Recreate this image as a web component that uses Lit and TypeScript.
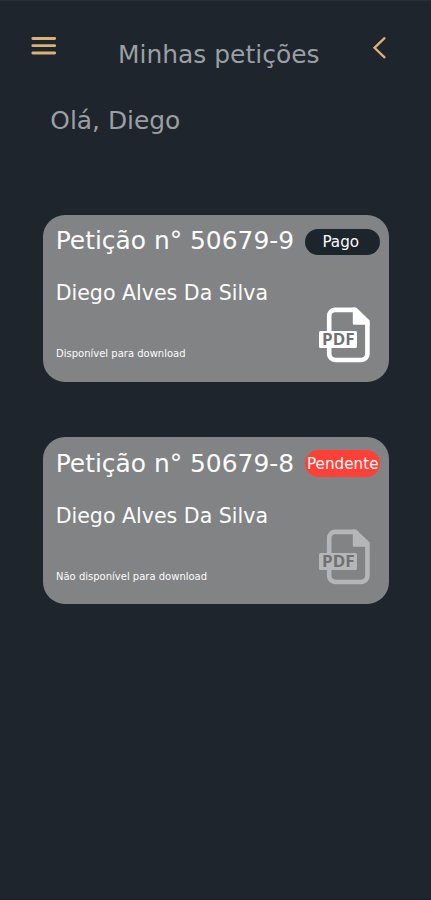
import { LitElement, html, svg, css } from "lit";
import { customElement, property } from "lit/decorators.js";

@customElement("pdf-icon")
class PdfIcon extends LitElement {
  static styles = css`
    :host { display: block; width: 52px; height: 56px; }
    svg { display: block; }
    .label { font: bold 15.4px "Open Sans", "Noto Sans", sans-serif; fill: #6f7071; }
  `;
  render() {
    return html`<svg width="52" height="56" viewBox="0 0 52 56">
      ${svg`
        <path d="M36 2.900H16.200a6 6 0 0 0-6 6V47a6 6 0 0 0 6 6h26.200a6 6 0 0 0 6-6V16.500" fill="none" stroke="currentColor" stroke-width="4.600"/>
        <path d="M33.800 .6H37.200L50.700 13.600V17.800H34.800a1 1 0 0 1-1-1z" fill="currentColor"/>
        <rect x="0" y="24" width="38" height="17" rx="1.600" fill="currentColor"/>
        <text class="label" x="3" y="38" textLength="32.500" lengthAdjust="spacingAndGlyphs">PDF</text>
      `}
    </svg>`;
  }
}

@customElement("petition-card")
class PetitionCard extends LitElement {
  @property() number = "";
  @property() owner = "";
  @property() status = "";
  @property() note = "";
  @property({ type: Boolean, reflect: true }) pending = false;

  static styles = css`
    :host {
      display: flex; flex-direction: column; box-sizing: border-box;
      height: 166.500px; padding: 10px 8.500px 0 13px; border-radius: 22px;
      background: #828384; color: #fcfcfc; white-space: nowrap;
    }
    :host([pending]) { padding-top: 10.700px; }
    .top { display: flex; justify-content: space-between; align-items: flex-start; height: 53px; }
    .number { font-size: 24.900px; line-height: 30px; margin: 1px 0 0 -.3px; }
    .status {
      display: flex; align-items: center; justify-content: center; flex: none;
      width: 75.500px; height: 26.500px; margin-top: 3.500px; border-radius: 14px;
      box-sizing: border-box; padding-right: 3px;
      background: #1d252c; font-size: 15.200px;
    }
    :host([pending]) .status { background: #ff4036; padding: 0 0 0 1px; margin-top: 2.800px; }
    .bottom { display: flex; justify-content: space-between; }
    .details { display: flex; flex-direction: column; }
    .owner { font-size: 20.550px; line-height: 30px; margin-left: -.3px; }
    .note { font-size: 10px; line-height: 14px; margin-top: 39px; }
    pdf-icon { margin: 28.500px 9.500px 0 0; color: #fff; }
    :host([pending]) pdf-icon { color: #b5b6b8; }
  `;
  render() {
    return html`
      <div class="top">
        <div class="number">Petição n° ${this.number}</div>
        <div class="status">${this.status}</div>
      </div>
      <div class="bottom">
        <div class="details">
          <div class="owner">${this.owner}</div>
          <div class="note">${this.note}</div>
        </div>
        <pdf-icon></pdf-icon>
      </div>`;
  }
}

@customElement("app-root")
class AppRoot extends LitElement {
  static styles = css`
    :host {
      display: block; box-sizing: border-box; height: 900px; overflow: hidden;
      background: #1e252c; border-top: 1px solid #293037; border-bottom: 1px solid #1c1a29;
      font-family: "DejaVu Sans", sans-serif; color: #9b9fa3;
    }
    header { display: flex; justify-content: space-between; align-items: flex-start; padding: 35px 44px 0 31px; height: 34px; }
    h1 { margin: 4px 0 0 8.500px; font-weight: 400; font-size: 24.950px; line-height: 30px; white-space: nowrap; }
    svg { display: block; fill: none; stroke: #d9b277; stroke-linecap: round; }
    .greeting { margin: 36px 0 0 50.300px; font-size: 24.900px; line-height: 30px; }
    .list { display: flex; flex-direction: column; gap: 55.500px; margin: 79px 42.500px 0 43px; }
  `;
  render() {
    return html`
      <header>
        <svg width="26" height="22" viewBox="0 0 26 22" stroke-width="2.800">
          <path d="M1.800 2.500H23.700M1.800 9.700H23.700M1.800 17H23.700"/>
        </svg>
        <h1>Minhas petições</h1>
        <svg width="15" height="24" viewBox="0 0 15 24" stroke-width="2.300">
          <path d="M12.500 2.200L2.500 11.800L12.500 21.300"/>
        </svg>
      </header>
      <div class="greeting">Olá, Diego</div>
      <div class="list">
        <petition-card number="50679-9" owner="Diego Alves Da Silva" status="Pago" note="Disponível para download"></petition-card>
        <petition-card pending number="50679-8" owner="Diego Alves Da Silva" status="Pendente" note="Não disponível para download"></petition-card>
      </div>`;
  }
}
